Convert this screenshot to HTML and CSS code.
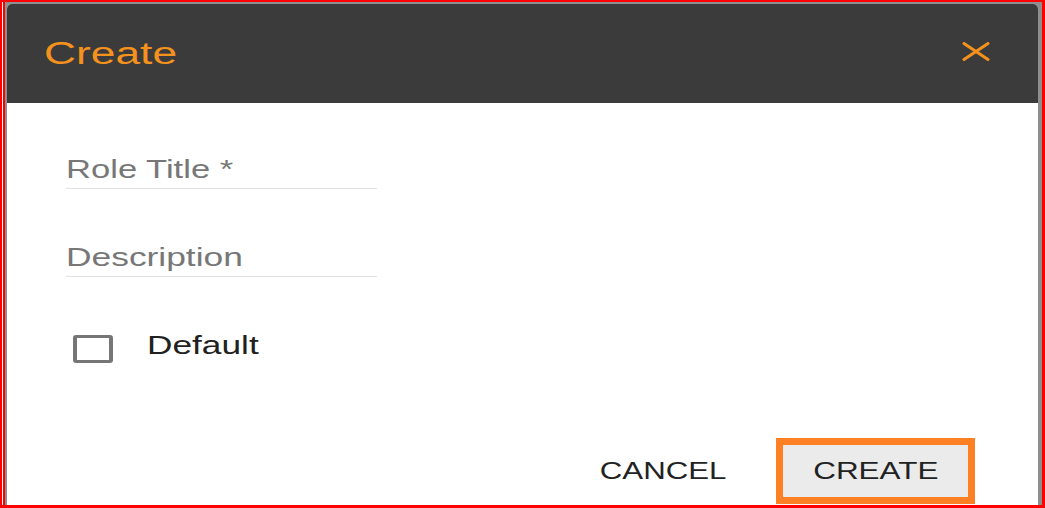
FILE: index.html
```html
<!DOCTYPE html>
<html lang="en">
<head>
  <meta charset="UTF-8">
  <meta name="viewport" content="width=device-width, initial-scale=1.0">
  <title>Create Role</title>
  <link rel="stylesheet" href="styles.css">
</head>
<body>
  <div class="shot">
    <div class="backdrop">

      <!-- Dialog criar perfil -->
      <div class="dialog">
        <div class="dialog-head">
          <h1><span class="wide wide-title">Create</span></h1>
          <button class="close" aria-label="Close">
            <svg width="28" height="19" viewBox="0 0 28 19">
              <path d="M2 1.5 L26 17.5 M26 1.5 L2 17.5" stroke="#f5921e" stroke-width="3" stroke-linecap="round" fill="none"/>
            </svg>
          </button>
        </div>

        <div class="dialog-body">
          <div class="field">
            <span class="wide wide-label">Role Title *</span>
          </div>
          <div class="field field-next">
            <span class="wide wide-desc">Description</span>
          </div>
          <label class="check-row">
            <span class="check-box"></span>
            <span class="wide wide-check">Default</span>
          </label>
        </div>

        <div class="dialog-actions">
          <button class="btn-cancel"><span class="wide wide-btn">CANCEL</span></button>
          <button class="btn-create"><span class="wide wide-btn-c">CREATE</span></button>
        </div>
      </div>

    </div>
  </div>
</body>
</html>
```

FILE: styles.css
```css
* {
  margin: 0;
  padding: 0;
  box-sizing: border-box;
}

body {
  font-family: 'Liberation Sans', Arial, sans-serif;
  background: #fff;
  width: 1045px;
  height: 508px;
  overflow: hidden;
}

.shot {
  height: 508px;
  border-style: solid;
  border-color: #ff0000;
  border-width: 2px 3px 3px 2px;
  display: flex;
}

.backdrop {
  flex: 1;
  margin-left: 1px;
  border-left: 2px solid #ff0000;
  background: #8e8e8e;
  padding: 2px 4px 0 2px;
  display: flex;
  flex-direction: column;
}

.dialog {
  flex: 1;
  background: #fff;
  border-radius: 5px 5px 0 0;
  overflow: hidden;
  display: flex;
  flex-direction: column;
}

/* texto esticado na horizontal como na captura */
.wide {
  display: inline-block;
  transform-origin: left center;
  white-space: nowrap;
}

.wide-title { transform: scaleX(1.43); }
.wide-label { transform: scaleX(1.33); }
.wide-desc { transform: scaleX(1.36); }
.wide-check { transform: scaleX(1.41); }
.wide-btn { transform: scaleX(1.3); transform-origin: right center; }
.wide-btn-c { transform: scaleX(1.31); transform-origin: center; }

.dialog-head {
  height: 99px;
  background: #3b3b3b;
  display: flex;
  align-items: center;
  padding: 0 48px 0 37px;
}

h1 {
  font-size: 31px;
  font-weight: normal;
  color: #f5921e;
  line-height: 36px;
}

.close {
  margin-left: auto;
  margin-top: -5px;
  background: none;
  border: none;
  display: flex;
}

.dialog-body {
  padding: 51px 0 0 59px;
}

.field {
  width: 311px;
  font-size: 26px;
  line-height: 30px;
  color: #777;
  padding-bottom: 4px;
  border-bottom: 1px solid #e2e2e2;
}

.field-next {
  margin-top: 53px;
}

.check-row {
  display: flex;
  align-items: flex-start;
  margin-top: 54px;
  font-size: 25px;
  line-height: 28px;
  color: #212121;
}

.check-box {
  width: 40px;
  height: 28px;
  margin: 4px 34px 0 7px;
  border: 3px solid #767676;
  border-left-width: 4px;
  border-right-width: 4px;
  border-radius: 3px;
}

.dialog-actions {
  margin-top: auto;
  display: flex;
  justify-content: flex-end;
  align-items: center;
  padding: 0 63px 1px 0;
}

.dialog-actions button {
  font-family: inherit;
  font-size: 24px;
  line-height: 28px;
  color: #222;
  background: none;
  border: none;
}

.btn-cancel {
  margin-right: 50px;
}

.dialog-actions .btn-create {
  width: 199px;
  height: 66px;
  border: 7px solid #fd8024;
  background: #ebebeb;
}
```
